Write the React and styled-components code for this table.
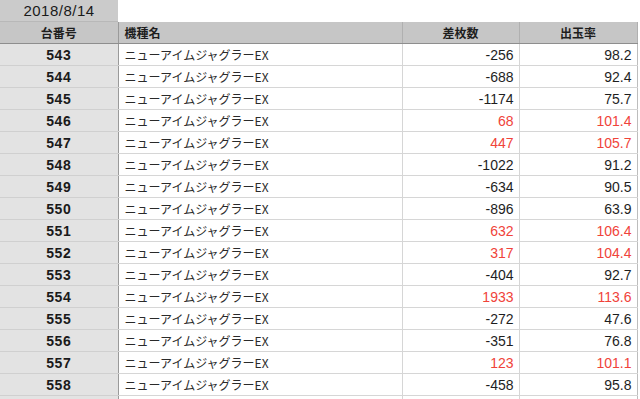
import React from 'react';
import styled, { createGlobalStyle } from 'styled-components';

const GlobalStyle = createGlobalStyle`
   html, body {
      margin: 0;
      padding: 0;
      background: #fff;
      overflow: hidden;
   }
   body {
      font-family: "Liberation Sans", "Noto Sans CJK JP", sans-serif;
      color: #222;
   }
`;

const RED = '#f0433a';

const Page = styled.div`
   width: 640px;
   height: 399px;
   overflow: hidden;
`;

const DateCell = styled.div`
   width: 118px;
   height: 22px;
   background: #cbcbcb;
   border-bottom: 1px solid #b8b8b8;
   box-sizing: border-box;
   display: flex;
   align-items: center;
   justify-content: center;
   font-size: 15px;
   letter-spacing: 0.5px;
   color: #1a1a1a;
`;

const Table = styled.table`
   border-collapse: collapse;
   table-layout: fixed;
   width: 637px;
   font-size: 14px;
`;

const HeadCell = styled.th`
   height: 21px;
   padding: 0 6px;
   background: #c6c6c6;
   border-right: 1px solid ${props => (props.$strong ? '#9a9a9a' : '#b0b0b0')};
   border-bottom: 1px solid #8e8e8e;
   font-weight: bold;
   font-size: 12px;
   color: #1e1e1e;
   text-align: ${props => props.$align || 'center'};
   font-family: "Noto Sans CJK JP", sans-serif;
   line-height: 21px;
`;

const Row = styled.tr`
   height: 22px;
`;

const NoCell = styled.td`
   padding: 0;
   background: #e3e3e3;
   border-right: 1px solid #9a9a9a;
   border-bottom: 1px solid #d0d0d0;
   text-align: center;
   font-weight: bold;
   font-size: 14px;
   letter-spacing: 0.5px;
   color: #1a1a1a;
`;

const NameCell = styled.td`
   padding: 0 6px;
   border-right: 1px solid #d6d6d6;
   border-bottom: 1px solid #d6d6d6;
   font-family: "Noto Sans CJK JP", sans-serif;
   font-size: 12px;
   color: #2a2a2a;
   white-space: nowrap;
   overflow: hidden;
`;

const NumCell = styled.td`
   padding: 0 5px;
   border-right: 1px solid ${props => (props.$last ? '#bdbdbd' : '#d6d6d6')};
   border-bottom: 1px solid #d6d6d6;
   text-align: right;
   font-size: 14px;
   color: ${props => (props.$plus ? RED : '#1e1e1e')};
`;

const rows = [
   [543, -256, '98.2'],
   [544, -688, '92.4'],
   [545, -1174, '75.7'],
   [546, 68, '101.4'],
   [547, 447, '105.7'],
   [548, -1022, '91.2'],
   [549, -634, '90.5'],
   [550, -896, '63.9'],
   [551, 632, '106.4'],
   [552, 317, '104.4'],
   [553, -404, '92.7'],
   [554, 1933, '113.6'],
   [555, -272, '47.6'],
   [556, -351, '76.8'],
   [557, 123, '101.1'],
   [558, -458, '95.8'],
];

export default function App() {
   return (
      <Page>
         <GlobalStyle />
         <DateCell>2018/8/14</DateCell>
         <Table>
            <colgroup>
               <col style={{ width: 118 }} />
               <col style={{ width: 284 }} />
               <col style={{ width: 117 }} />
               <col style={{ width: 118 }} />
            </colgroup>
            <thead>
               <tr>
                  <HeadCell $strong>台番号</HeadCell>
                  <HeadCell $align="left">機種名</HeadCell>
                  <HeadCell>差枚数</HeadCell>
                  <HeadCell>出玉率</HeadCell>
               </tr>
            </thead>
            <tbody>
               {rows.map(([no, diff, rate]) => (
                  <Row key={`row-${no}`}>
                     <NoCell>{no}</NoCell>
                     <NameCell>ニューアイムジャグラーEX</NameCell>
                     <NumCell $plus={diff > 0}>{diff}</NumCell>
                     <NumCell $plus={diff > 0} $last>{rate}</NumCell>
                  </Row>
               ))}
               <Row>
                  <NoCell />
                  <NameCell />
                  <NumCell />
                  <NumCell $last />
               </Row>
            </tbody>
         </Table>
      </Page>
   );
}
